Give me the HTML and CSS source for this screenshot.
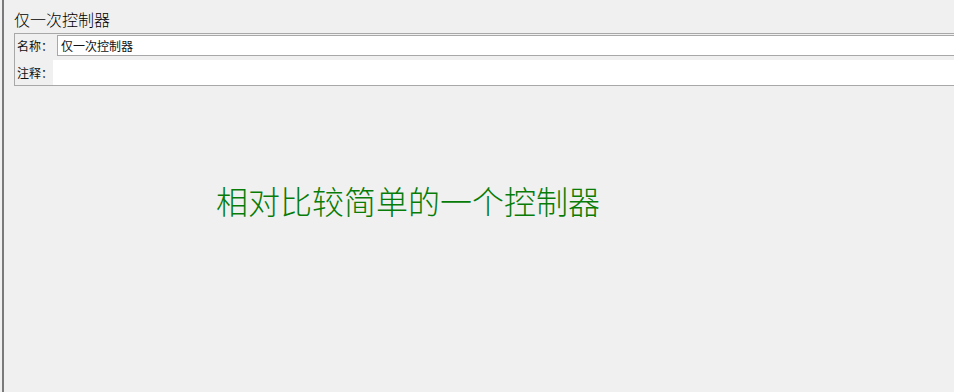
FILE: index.html
```html
<!DOCTYPE html>
<html lang="zh-CN">
<head>
<meta charset="utf-8">
<title>仅一次控制器</title>
<link rel="stylesheet" href="styles.css">
</head>
<body>
<div class="frame">
  <div class="title">仅一次控制器</div>
  <div class="panel">
    <div class="row row-name">
      <span class="label label-name">名称：</span>
      <div class="field">仅一次控制器</div>
    </div>
    <div class="row row-comment">
      <span class="label label-comment">注释：</span>
      <div class="area"></div>
    </div>
  </div>
  <div class="note">相对比较简单的一个控制器</div>
</div>
</body>
</html>
```
FILE: styles.css
```css
html, body {
  margin: 0;
  padding: 0;
  background: #f0f0f0;
  font-family: "Noto Sans CJK SC", "Noto Sans", sans-serif;
  overflow: hidden;
}
.frame {
  margin-left: 2px;
  border-left: 2px solid #7a7a7a;
  height: 392px;
  box-sizing: border-box;
  padding-left: 10px;
  padding-top: 9px;
}
.title {
  font-size: 16px;
  line-height: 20px;
  color: #000;
  height: 20px;
  margin-bottom: 4px;
  font-weight: 300;
}
.panel {
  border: 1px solid #a8a8a8;
  border-right: none;
  padding: 1px 0 0 1px;
  height: 50px;
  box-sizing: content-box;
  display: flex;
  flex-direction: column;
}
.row {
  display: flex;
  align-items: center;
}
.label {
  font-size: 12px;
  color: #111;
  padding-left: 1px;
  box-sizing: border-box;
}
.label-name { width: 41px; }
.label-comment { width: 37px; }
.row-name { height: 21px; }
.field {
  flex: 1;
  height: 21px;
  box-sizing: border-box;
  border: 1px solid #a8a8a8;
  border-right: none;
  background: #fff;
  font-size: 12px;
  line-height: 19px;
  padding-left: 3px;
  color: #111;
}
.row-comment {
  margin-top: 4px;
  height: 25px;
}
.area {
  flex: 1;
  height: 25px;
  background: #fff;
}
.note {
  margin-top: 94px;
  margin-left: 202px;
  font-size: 32px;
  line-height: 40px;
  color: #077c07;
  font-weight: 300;
  white-space: nowrap;
}
```
